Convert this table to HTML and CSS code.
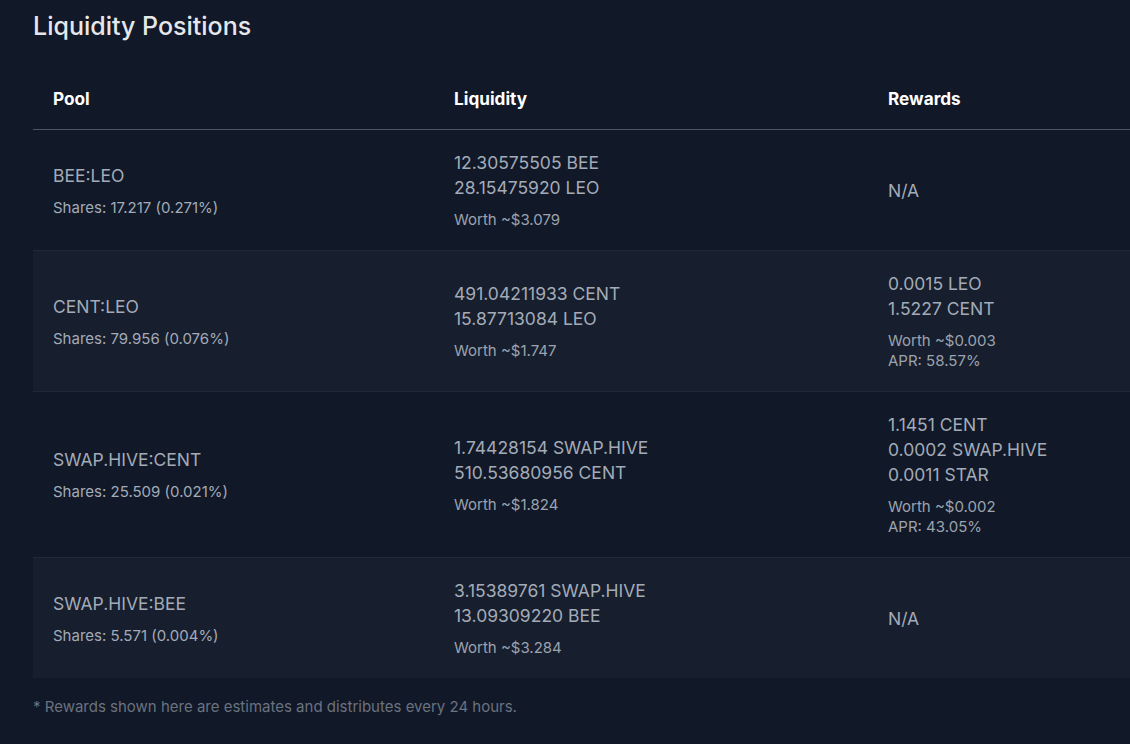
FILE: index.html
```html
<!DOCTYPE html>
<html lang="en">
<head>
<meta charset="utf-8">
<title>Liquidity Positions</title>
<link rel="stylesheet" href="styles.css">
</head>
<body>
<div class="page">
  <h1 class="title">Liquidity Positions</h1>
  <table class="positions">
    <colgroup>
      <col class="col-pool">
      <col class="col-liq">
      <col class="col-rew">
    </colgroup>
    <thead>
      <tr>
        <th>Pool</th>
        <th>Liquidity</th>
        <th>Rewards</th>
      </tr>
    </thead>
    <tbody>
      <tr>
        <td>
          <div class="pool-name">BEE:LEO</div>
          <div class="shares">Shares: 17.217 (0.271%)</div>
        </td>
        <td>
          <div class="amt">12.30575505 BEE</div>
          <div class="amt">28.15475920 LEO</div>
          <div class="worth">Worth ~$3.079</div>
        </td>
        <td>
          <div class="amt">N/A</div>
        </td>
      </tr>
      <tr>
        <td>
          <div class="pool-name">CENT:LEO</div>
          <div class="shares">Shares: 79.956 (0.076%)</div>
        </td>
        <td>
          <div class="amt">491.04211933 CENT</div>
          <div class="amt">15.87713084 LEO</div>
          <div class="worth">Worth ~$1.747</div>
        </td>
        <td>
          <div class="amt">0.0015 LEO</div>
          <div class="amt">1.5227 CENT</div>
          <div class="worth">Worth ~$0.003</div>
          <div class="apr">APR: 58.57%</div>
        </td>
      </tr>
      <tr>
        <td>
          <div class="pool-name">SWAP.HIVE:CENT</div>
          <div class="shares">Shares: 25.509 (0.021%)</div>
        </td>
        <td>
          <div class="amt">1.74428154 SWAP.HIVE</div>
          <div class="amt">510.53680956 CENT</div>
          <div class="worth">Worth ~$1.824</div>
        </td>
        <td>
          <div class="amt">1.1451 CENT</div>
          <div class="amt">0.0002 SWAP.HIVE</div>
          <div class="amt">0.0011 STAR</div>
          <div class="worth">Worth ~$0.002</div>
          <div class="apr">APR: 43.05%</div>
        </td>
      </tr>
      <tr>
        <td>
          <div class="pool-name">SWAP.HIVE:BEE</div>
          <div class="shares">Shares: 5.571 (0.004%)</div>
        </td>
        <td>
          <div class="amt">3.15389761 SWAP.HIVE</div>
          <div class="amt">13.09309220 BEE</div>
          <div class="worth">Worth ~$3.284</div>
        </td>
        <td>
          <div class="amt">N/A</div>
        </td>
      </tr>
    </tbody>
  </table>
  <p class="note">* Rewards shown here are estimates and distributes every 24 hours.</p>
</div>
</body>
</html>
```
FILE: styles.css
```css
html, body {
  margin: 0;
  padding: 0;
  background: #111827;
  overflow: hidden;
}

body {
  font-family: Inter, "Noto Sans", sans-serif;
  color: #9ca3af;
}

.page {
  padding: 10px 0 0 33px;
}

.title {
  margin: 0 0 27px;
  font-size: 25px;
  line-height: 32px;
  font-weight: 500;
  color: #e5e7eb;
}

.positions {
  width: 100%;
  border-collapse: collapse;
  table-layout: fixed;
}

.col-pool { width: 401px; }
.col-liq { width: 434px; }

.positions th {
  text-align: left;
  padding: 20px;
  font-size: 17.2px;
  line-height: 20px;
  font-weight: 700;
  color: #ffffff;
  border-bottom: 1px solid #4b5563;
}

.positions td {
  padding: 20px;
  vertical-align: middle;
}

.positions tbody tr + tr td {
  border-top: 1px solid #1f2937;
}

.positions tbody tr:nth-child(even) {
  background: #171e2d;
}

.pool-name {
  font-size: 17.5px;
  line-height: 25px;
  color: #a3abb8;
}

.shares {
  margin-top: 10px;
  font-size: 15px;
  line-height: 20px;
  color: #a3abb8;
}

.amt {
  font-size: 17.5px;
  line-height: 25px;
  color: #a3abb8;
}

.worth {
  margin-top: 10px;
  font-size: 15px;
  line-height: 20px;
  color: #9ca3af;
}

.apr {
  font-size: 15px;
  line-height: 20px;
  color: #9ca3af;
}

.note {
  margin: 0;
  padding-top: 19px;
  font-size: 15px;
  line-height: 20px;
  color: #6b7280;
}
```
